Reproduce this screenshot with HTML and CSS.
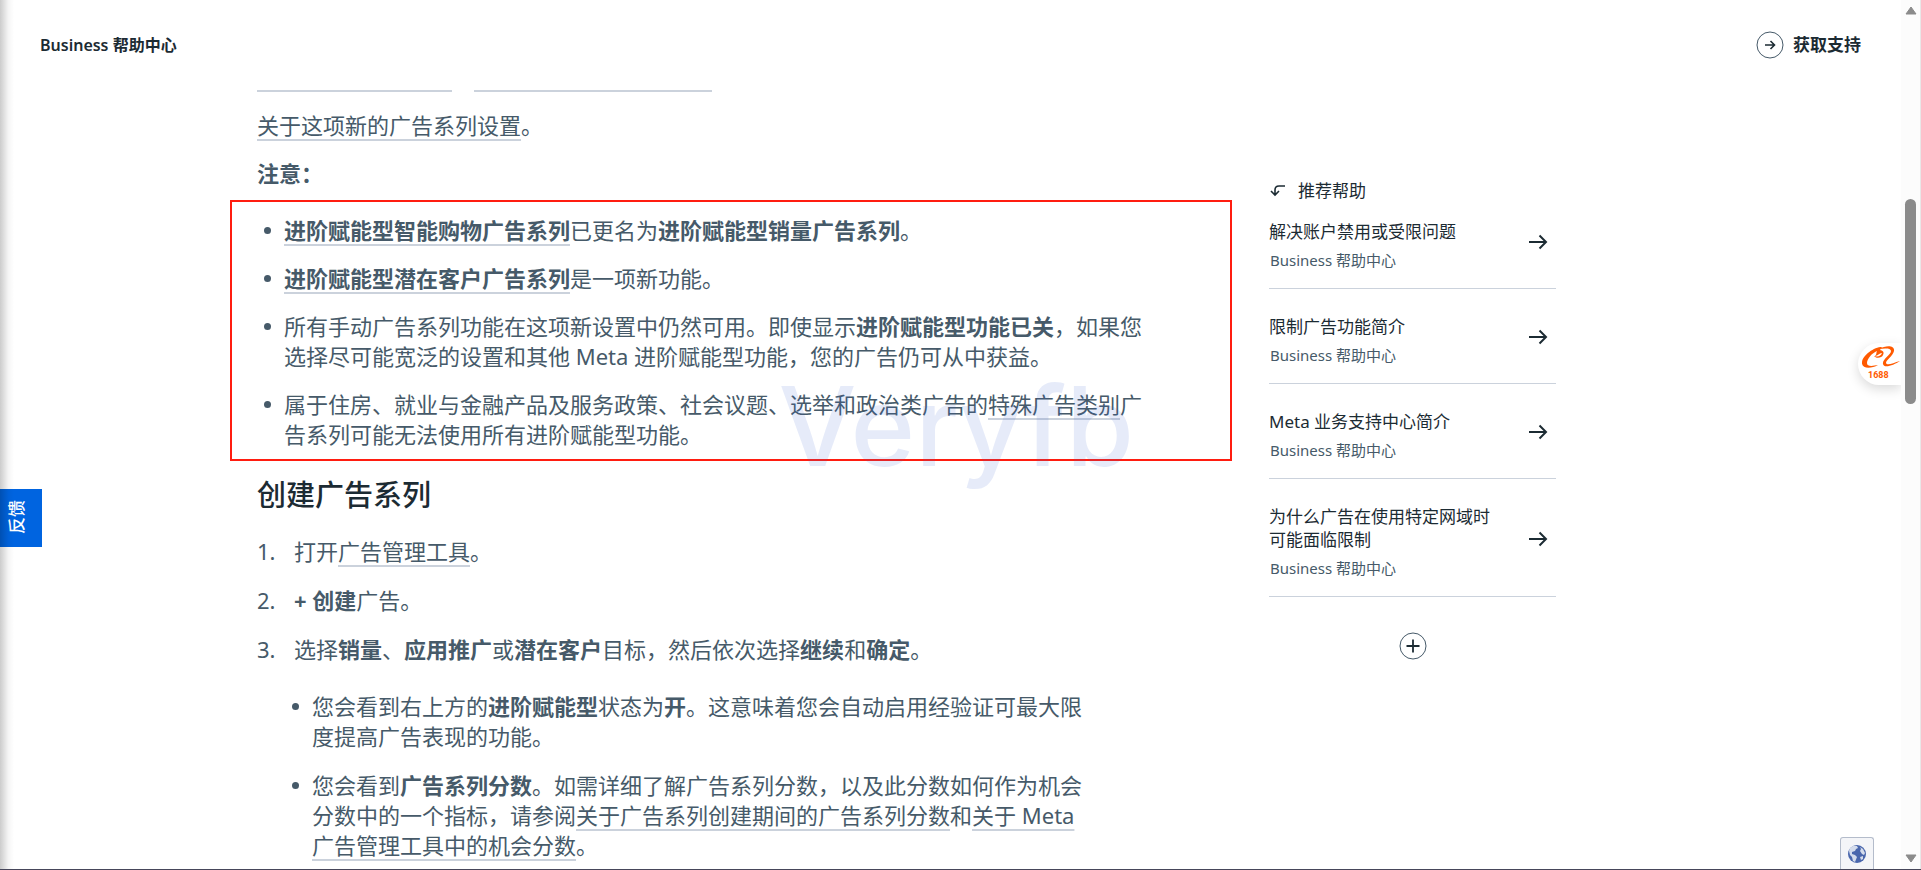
FILE: index.html
```html
<!DOCTYPE html>
<html lang="zh-CN">
<head>
  <meta charset="UTF-8">
  <meta name="viewport" content="width=device-width, initial-scale=1.0">
  <title>Business 帮助中心</title>
  <link rel="stylesheet" href="styles.css">
</head>
<body>

<div class="page">
  <header class="topbar">
    <a class="brand" href="#">Business 帮助中心</a>
    <a class="support" href="#">
      <svg width="28" height="28" viewBox="0 0 28 28" fill="none" stroke="#465a69">
        <circle cx="14" cy="14" r="13"/>
        <path d="M9 14h9.500M14.500 10l4 4-4 4" stroke="#1c2b33" stroke-width="1.600"/>
      </svg>
      获取支持
    </a>
  </header>

  <div class="content">
    <main class="article">
      <div class="cut-links"><span class="cut-short"></span><span class="cut-long"></span></div>
      <p><a href="#">关于这项新的广告系列设置</a>。</p>
      <p><strong>注意：</strong></p>

      <div class="notice">
        <ul>
          <li><a href="#"><strong>进阶赋能型智能购物广告系列</strong></a>已更名为<strong>进阶赋能型销量广告系列</strong>。</li>
          <li><a href="#"><strong>进阶赋能型潜在客户广告系列</strong></a>是一项新功能。</li>
          <li>所有手动广告系列功能在这项新设置中仍然可用。即使显示<strong>进阶赋能型功能已关</strong>，如果您选择尽可能宽泛的设置和其他 Meta 进阶赋能型功能，您的广告仍可从中获益。</li>
          <li>属于住房、就业与金融产品及服务政策、社会议题、选举和政治类广告的<a href="#">特殊广告类别</a>广告系列可能无法使用所有进阶赋能型功能。</li>
        </ul>
        <span class="watermark">Veryfb</span>
      </div>

      <h2>创建广告系列</h2>
      <ol>
        <li>打开<a href="#">广告管理工具</a>。</li>
        <li><strong>+ 创建</strong>广告。</li>
        <li>选择<strong>销量</strong>、<strong>应用推广</strong>或<strong>潜在客户</strong>目标，然后依次选择<strong>继续</strong>和<strong>确定</strong>。
          <ul>
            <li>您会看到右上方的<strong>进阶赋能型</strong>状态为<strong>开</strong>。这意味着您会自动启用经验证可最大限度提高广告表现的功能。</li>
            <li>您会看到<strong>广告系列分数</strong>。如需详细了解广告系列分数，以及此分数如何作为机会分数中的一个指标，请参阅<a href="#">关于广告系列创建期间的广告系列分数</a>和<a href="#">关于 Meta 广告管理工具中的机会分数</a>。</li>
          </ul>
        </li>
      </ol>
    </main>

    <aside class="sidebar">
      <div class="sidebar-title">
        <svg width="16" height="14" viewBox="0 0 16 14" fill="none" stroke="#1c2b33" stroke-width="1.600">
          <path d="M15 2H9Q5 2 5 6v5M1 7l4 4 4-4"/>
        </svg>
        推荐帮助
      </div>
      <a class="card" href="#">
        <span class="card-text"><span class="card-name">解决账户禁用或受限问题</span><span class="card-source">Business 帮助中心</span></span>
        <svg width="20" height="16" viewBox="0 0 20 16"><path d="M1 8h17M11.500 1.500L18 8l-6.500 6.500"/></svg>
      </a>
      <a class="card" href="#">
        <span class="card-text"><span class="card-name">限制广告功能简介</span><span class="card-source">Business 帮助中心</span></span>
        <svg width="20" height="16" viewBox="0 0 20 16"><path d="M1 8h17M11.500 1.500L18 8l-6.500 6.500"/></svg>
      </a>
      <a class="card" href="#">
        <span class="card-text"><span class="card-name">Meta 业务支持中心简介</span><span class="card-source">Business 帮助中心</span></span>
        <svg width="20" height="16" viewBox="0 0 20 16"><path d="M1 8h17M11.500 1.500L18 8l-6.500 6.500"/></svg>
      </a>
      <a class="card" href="#">
        <span class="card-text"><span class="card-name">为什么广告在使用特定网域时可能面临限制</span><span class="card-source">Business 帮助中心</span></span>
        <svg width="20" height="16" viewBox="0 0 20 16"><path d="M1 8h17M11.500 1.500L18 8l-6.500 6.500"/></svg>
      </a>
      <button class="more" type="button" aria-label="更多">
        <svg width="28" height="28" viewBox="0 0 28 28" fill="none" stroke="#465a69">
          <circle cx="14" cy="14" r="13"/>
          <path d="M14 7.500v13M7.500 14h13" stroke="#1c2b33" stroke-width="1.800"/>
        </svg>
      </button>
    </aside>
  </div>

  <div class="edge-shadow"></div>
  <button class="feedback" type="button"><span>反馈</span></button>

  <a class="ali" href="#">
    <svg width="39" height="24" viewBox="0 0 39 24" fill="#ff5a00">
      <path d="M20 1C12 1 1 9 0 16c-1 7 9 7 16 3-5 1-11 2-11-2 0-4 5-10 10-12-1 2 0 3-2 5 3 0 4-3 7-3-1 3-4 4-8 3 2 3 8 2 9-1 1-2 1-4-3-5z"/>
      <path d="M17 3c7-4 16-4 15 2-1 5-8 9-8 12 1 3 7 0 14-2-6 4-16 8-17 3-1-5 8-9 8-13 0-3-6-3-12-2z"/>
    </svg>
    <span>1688</span>
  </a>

  <button class="globe" type="button" aria-label="语言">
    <svg width="20" height="20" viewBox="0 0 20 20">
      <circle cx="10" cy="10" r="9" fill="#4a67ad"/>
      <path d="M3 4l3-2 4 0 1 2-2 1-1 2-3 1 0 2 3 1 2 2-2 5-2-1-1-4-2-2-1-4zM13 3l3 2 2 4-1 2-2-1-2-3 1-2zM13 13l3-1 0 3-2 1z" fill="#d4dcec"/>
    </svg>
  </button>
</div>

<div class="scrollbar">
  <svg width="14" height="10" viewBox="0 0 14 10"><path d="M7 1l5 7H2z"/></svg>
  <div class="thumb"></div>
  <svg width="14" height="10" viewBox="0 0 14 10"><path d="M7 9l5-7H2z"/></svg>
</div>

</body>
</html>
```

FILE: styles.css
```css
* {
  box-sizing: border-box;
}
body {
  margin: 0;
  display: flex;
  height: 100vh;
  overflow: hidden;
  background: #fff;
  border-bottom: 1px solid #46465a;
  color: #465a69;
  font-family: "Noto Sans", "Noto Sans CJK SC", sans-serif;
  font-size: 22px;
  line-height: 30px;
}
a {
  color: inherit;
  text-decoration: none;
}
button {
  border: none;
  padding: 0;
  background: none;
  font-family: inherit;
  cursor: pointer;
}
svg {
  display: block;
  flex: none;
}
.page {
  position: relative;
  flex: 1;
  min-width: 0;
  overflow: hidden;
}

/* top bar */
.topbar {
  display: flex;
  align-items: center;
  justify-content: space-between;
  height: 90px;
  padding: 0 40px;
  color: #1c2b33;
  font-weight: 600;
}
.brand {
  font-size: 16px;
}
.support {
  display: flex;
  align-items: center;
  gap: 9px;
  font-size: 17px;
}

/* article */
.content {
  display: flex;
  align-items: flex-start;
  gap: 37px;
  padding: 0 40px 0 230px;
}
.article {
  flex: 0 1 1002px;
}
.article p {
  margin: 18px 0 0 27px;
}
.article p a,
.article li a {
  text-decoration: underline 2px #cbd2dc;
  text-underline-offset: 5px;
  text-decoration-skip-ink: none;
}
.cut-links {
  display: flex;
  gap: 22px;
  padding-left: 27px;
}
.cut-links span {
  height: 2px;
  background: #cbd2dc;
}
.cut-short {
  width: 195px;
}
.cut-long {
  width: 238px;
}
.notice {
  position: relative;
  margin-top: 12px;
  padding: 13px 70px 10px 52px;
  border: 2px solid #ff1d10;
}
.article ul,
.article ol {
  margin: 0;
  padding: 0;
  list-style: none;
}
.article li {
  position: relative;
}
.article li + li {
  margin-top: 18px;
}
.article ul > li::before {
  content: "";
  position: absolute;
  left: -20px;
  top: 12px;
  width: 7px;
  height: 7px;
  border-radius: 50%;
  background: #465a69;
}
.watermark {
  position: absolute;
  right: 96px;
  bottom: -22px;
  color: rgba(60, 100, 210, 0.13);
  font-family: Inter, sans-serif;
  font-size: 110px;
  font-weight: 500;
  line-height: 110px;
  pointer-events: none;
}
.article h2 {
  margin: 14px 0 21px 27px;
  color: #1c2b33;
  font-size: 29px;
  font-weight: 500;
  line-height: 40px;
}
.article ol {
  margin-left: 27px;
  padding-left: 37px;
  counter-reset: step;
}
.article ol li + li {
  margin-top: 19px;
}
.article ol > li {
  counter-increment: step;
}
.article ol > li::before {
  content: counter(step) ".";
  position: absolute;
  left: -37px;
}
.article ol ul {
  margin-top: 27px;
  padding: 0 140px 0 18px;
}

/* recommended help */
.sidebar {
  flex: 0 0 287px;
  padding-top: 89px;
  color: #1c2b33;
}
.sidebar-title {
  display: flex;
  align-items: center;
  gap: 12px;
  padding-left: 1px;
  font-size: 17px;
  line-height: 23px;
}
.card {
  display: flex;
  align-items: center;
  justify-content: space-between;
  padding: 26px 8px 17px 0;
  border-bottom: 1px solid #cbd2dc;
}
.sidebar-title + .card {
  padding-top: 18px;
}
.card-text {
  display: flex;
  flex-direction: column;
  gap: 6px;
  width: 228px;
}
.card-name {
  font-size: 17px;
  line-height: 23px;
}
.card-source {
  padding-left: 1px;
  color: #465a69;
  font-size: 15px;
  line-height: 22px;
}
.card svg {
  margin-bottom: 7px;
  fill: none;
  stroke: #1c2b33;
  stroke-width: 2;
}
.more {
  display: block;
  margin: 35px auto 0;
}

/* things pinned over the page */
.edge-shadow {
  position: absolute;
  top: 0;
  bottom: 0;
  left: 0;
  z-index: 2;
  width: 14px;
  background: linear-gradient(to right, rgba(0, 0, 0, 0.2), rgba(0, 0, 0, 0.04) 60%, transparent);
  pointer-events: none;
}
.feedback {
  position: absolute;
  left: 0;
  top: 489px;
  width: 42px;
  height: 58px;
  padding: 4px 8px 0 0;
  background: #0064e0;
  color: #fff;
  font-size: 17px;
  font-weight: 500;
  line-height: 24px;
}
.feedback span {
  display: inline-block;
  writing-mode: vertical-rl;
  text-orientation: sideways;
  transform: rotate(180deg);
}
.ali {
  position: absolute;
  right: 0;
  top: 343px;
  width: 43px;
  height: 42px;
  padding: 3px 0 0 4px;
  border-radius: 21px 0 0 21px;
  background: #fff;
  box-shadow: 0 4px 12px rgba(0, 0, 0, 0.15);
  color: #ff5a00;
  font-family: Roboto, sans-serif;
  font-size: 9px;
  font-weight: 700;
  line-height: 10px;
}
.ali span {
  display: block;
  padding-left: 6px;
}
.globe {
  position: absolute;
  right: 27px;
  bottom: 0;
  display: flex;
  justify-content: center;
  align-items: center;
  width: 34px;
  height: 32px;
  border: 1px solid #b4bccb;
  border-bottom: none;
  border-radius: 3px 3px 0 0;
  background: #f4f5f8;
}

/* scrollbar */
.scrollbar {
  display: flex;
  flex-direction: column;
  align-items: center;
  justify-content: space-between;
  width: 20px;
  padding: 6px 0;
  border-right: 1px solid #e8e8e8;
  background: #fcfcfc;
  fill: #8b8b8b;
  stroke: #8b8b8b;
  stroke-linejoin: round;
}
.thumb {
  width: 11px;
  height: 205px;
  margin: 183px 0 auto;
  border-radius: 6px;
  background: #8b8b8b;
}
```
